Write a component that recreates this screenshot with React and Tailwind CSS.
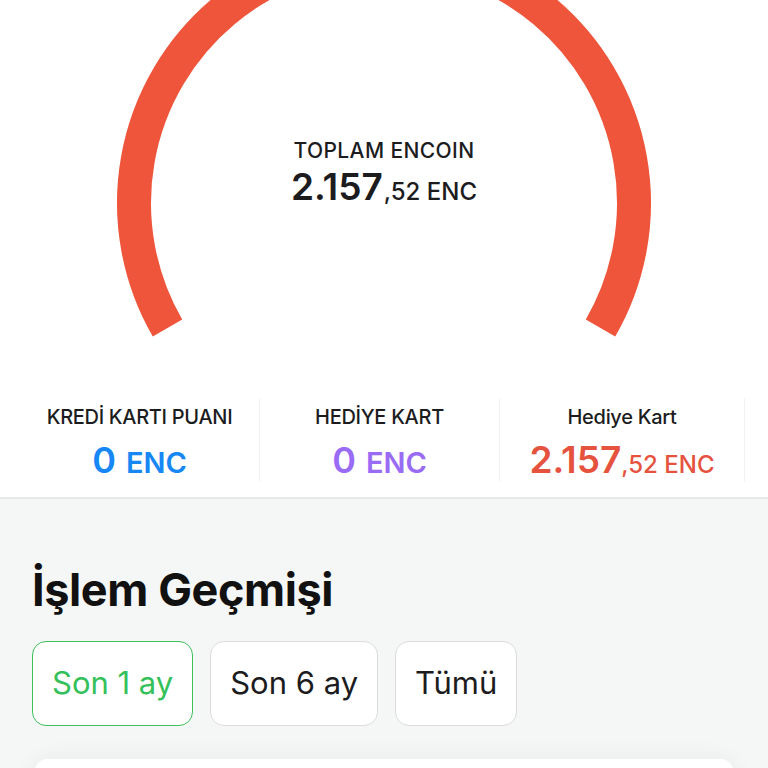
import React from "react";

const font = { fontFamily: "Inter, 'Noto Sans', sans-serif" };

function Stat({ label, whole, color }) {
  return (
    <div className="w-[240px] h-[84px] shrink-0 flex flex-col items-center justify-between pt-[7px] pb-[1px] border-r border-[#f1f1f1]">
      <div className="text-[20px] leading-[24px] font-medium text-[#1c1c1e] tracking-[-0.3px]">
        {label}
      </div>
      <div className={`flex items-baseline ${color}`}>
        <span className="text-[36px] leading-[42px] font-semibold">{whole}</span>
        <span className="text-[29px] leading-[34px] font-semibold ml-[10px]">ENC</span>
      </div>
    </div>
  );
}

function Stat3() {
  return (
    <div className="w-[245px] h-[84px] shrink-0 flex flex-col items-center justify-between pt-[7px] pb-[1px] border-r border-[#f1f1f1]">
      <div className="text-[20px] leading-[24px] font-medium text-[#1c1c1e] tracking-[-0.3px]">
        Hediye Kart
      </div>
      <div className="flex items-baseline text-[#e5533f]">
        <span className="text-[37px] leading-[42px] font-semibold">2.157</span>
        <span className="text-[24px] leading-[30px] font-medium">,52 ENC</span>
      </div>
    </div>
  );
}

export default function App() {
  return (
    <div className="w-[768px] h-[768px] overflow-hidden bg-[#f5f6f6]" style={font}>
      <div className="bg-white border-b-2 border-[#e7e8e8]">
        <div className="grid">
          <svg
            className="col-start-1 row-start-1"
            width="768"
            height="350"
            viewBox="0 0 768 350"
          >
            <path
              d="M 167.5 328 A 250 250 0 1 1 600.5 328"
              fill="none"
              stroke="#ee553a"
              strokeWidth="34"
            />
          </svg>
          <div className="col-start-1 row-start-1 flex flex-col items-center pt-[137px]">
            <div className="text-[21px] leading-[28px] font-medium text-[#1c1c1e] tracking-[0.4px]">
              TOPLAM ENCOIN
            </div>
            <div className="flex items-baseline text-[#1c1c1e]">
              <span className="text-[37px] leading-[44px] font-semibold">2.157</span>
              <span className="text-[24px] leading-[30px] font-medium ml-[1px]">,52 ENC</span>
            </div>
          </div>
        </div>
        <div className="flex pl-[20px] mt-[48px] pb-[15px]">
          <Stat label="KREDİ KARTI PUANI" whole="0" color="text-[#1787f5]" />
          <Stat label="HEDİYE KART" whole="0" color="text-[#9a6cf5]" />
          <Stat3 />
        </div>
      </div>
      <div className="px-[32px] pt-[65px]">
        <h1 className="text-[45px] leading-[52px] font-bold text-[#111111] tracking-[-0.4px]">
          İşlem Geçmişi
        </h1>
        <div className="flex gap-[17px] mt-[25px]">
          <button className="h-[85px] px-[19px] rounded-[14px] bg-white border border-[#3dbf5c] text-[#34c05a] text-[31px]">
            Son 1 ay
          </button>
          <button className="h-[85px] px-[19px] rounded-[14px] bg-white border border-[#dcdcdc] text-[#1c1c1e] text-[31px]">
            Son 6 ay
          </button>
          <button className="h-[85px] px-[19px] rounded-[14px] bg-white border border-[#dcdcdc] text-[#1c1c1e] text-[31px]">
            Tümü
          </button>
        </div>
        <div className="mt-[33px] mx-[3px] h-[120px] bg-white rounded-[12px] shadow-[0_0_24px_rgba(0,0,0,0.06)]" />
      </div>
    </div>
  );
}
